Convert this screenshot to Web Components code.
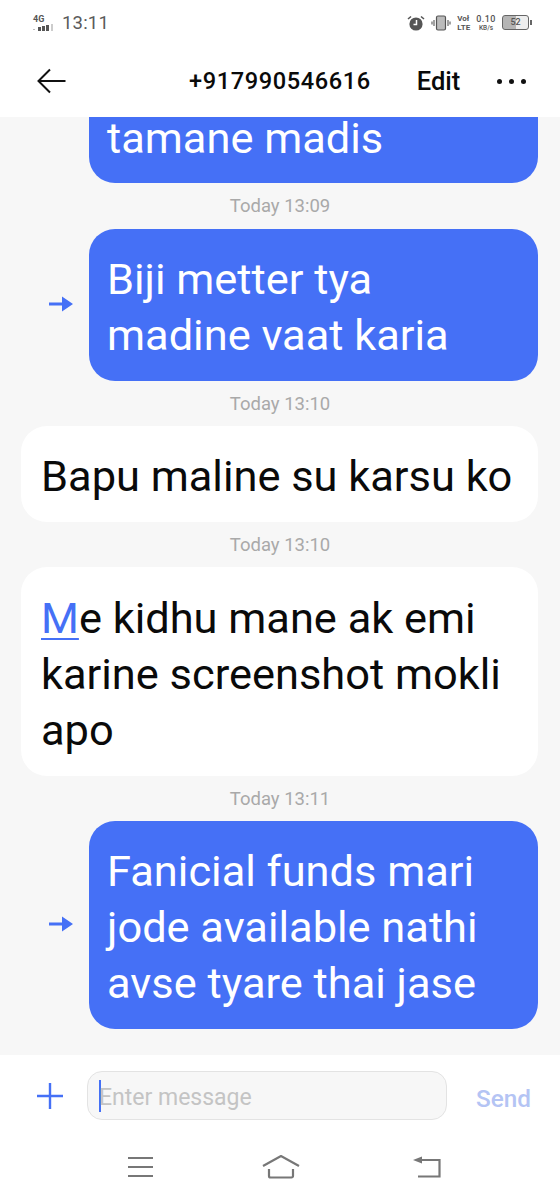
<!DOCTYPE html>
<html>
<head>
<meta charset="utf-8">
<style>
    html, body { margin: 0; padding: 0; }
    body { width: 560px; height: 1200px; overflow: hidden; background: #fff; font-family: Roboto, "Liberation Sans", sans-serif; }
    sms-screen { height: 1200px; }
</style>
</head>
<body>
<sms-screen>
    <status-bar slot="status"></status-bar>
    <title-bar slot="title" number="+917990546616"></title-bar>
    <msg-time>Today 13:09</msg-time>
    <msg-bubble out>Biji metter tya<br>madine vaat karia</msg-bubble>
    <msg-time>Today 13:10</msg-time>
    <msg-bubble>Bapu maline su karsu ko</msg-bubble>
    <msg-time>Today 13:10</msg-time>
    <msg-bubble style="--pt: 24px"><a>M</a>e kidhu mane ak emi<br>karine screenshot mokli<br>apo</msg-bubble>
    <msg-time>Today 13:11</msg-time>
    <msg-bubble out>Fanicial funds mari<br>jode available nathi<br>avse tyare thai jase</msg-bubble>
    <input-bar slot="input"></input-bar>
    <nav-keys slot="nav"></nav-keys>
</sms-screen>

<script>
class SmsScreen extends HTMLElement {
    constructor() {
        super();
        this.attachShadow({ mode: 'open' });
        this.shadowRoot.innerHTML = `
            <style>
                :host { display: flex; flex-direction: column; width: 560px; background: #fff; }
                .list {
                    flex: 1;
                    min-height: 0;
                    display: flex;
                    flex-direction: column;
                    justify-content: flex-end;
                    background: #f7f7f7;
                    padding: 0 22px 26px 21px;
                }
                .first {
                    align-self: flex-end;
                    width: 449px;
                    box-sizing: border-box;
                    padding: 0 20px 22px 18px;
                    background: #4570f6;
                    color: #fff;
                    font-size: 43.4px;
                    line-height: 44px;
                    border-radius: 0 0 26px 26px;
                }
            </style>
            <slot name="status"></slot>
            <slot name="title"></slot>
            <div class="list">
                <div class="first">tamane madis</div>
                <slot></slot>
            </div>
            <slot name="input"></slot>
            <slot name="nav"></slot>
        `;
    }
}

class StatusBar extends HTMLElement {
    constructor() {
        super();
        this.attachShadow({ mode: 'open' });
        this.shadowRoot.innerHTML = `
            <style>
                :host { display: flex; align-items: center; height: 45px; padding: 0 29px 0 32px; color: #555; }
                .time { font-size: 18.5px; margin-left: 5px; letter-spacing: .2px; color: #5a5a5a; }
                .net { position: relative; width: 25px; height: 18px; }
                .net b { position: absolute; left: 1px; top: 0; font: 700 9px/10px Roboto, sans-serif; }
                .net svg { position: absolute; left: 0; bottom: 0; }
                .right { margin-left: auto; display: flex; align-items: center; gap: 6px; }
                .stack { display: flex; flex-direction: column; align-items: center; font-weight: 500; }
                .lte { font-size: 8px; line-height: 9px; font-weight: 700; }
                .speed { font-size: 9px; line-height: 10px; letter-spacing: .5px; }
                .kb { font-size: 6.5px; line-height: 8px; }
                .batt { position: relative; width: 25px; height: 13px; border: 1px solid #666; border-radius: 3px; font-size: 9px; line-height: 13px; text-align: center; font-weight: 500; background: linear-gradient(90deg, #b5b5b5 52%, #eee 52%); margin-right: 2px; }
                .batt::after { content: ''; position: absolute; right: -4px; top: 4px; width: 2px; height: 5px; background: #666; }
            </style>
            <span class="net">
                <b>4G</b>
                <svg width="25" height="9" viewBox="0 0 25 9">
                    <rect x="1" y="6" width="2" height="1" fill="#bbb"/>
                    <rect x="6" y="4" width="3" height="4" fill="#555"/>
                    <rect x="10" y="3" width="3" height="5" fill="#555"/>
                    <rect x="14" y="2" width="3" height="6" fill="#555"/>
                    <rect x="19" y="1" width="2" height="7" fill="#ccc"/>
                </svg>
            </span>
            <span class="time">13:11</span>
            <span class="right">
                <svg width="18" height="16" viewBox="0 0 18 16">
                    <circle cx="9" cy="9" r="6.6" fill="#555"/>
                    <path d="M9.500 5v4.500H6.500" fill="none" stroke="#fff" stroke-width="1.500"/>
                    <path d="M1 4l3-2.500M17 4l-3-2.500" stroke="#555" stroke-width="1.600"/>
                </svg>
                <svg width="20" height="16" viewBox="0 0 20 16">
                    <rect x="5.500" y="1" width="9" height="14" rx="1.500" fill="#bbb" stroke="#555" stroke-width="1.200"/>
                    <path d="M3 5v6M1 6.500v3M17 5v6M19 6.500v3" stroke="#555" stroke-width="1.100"/>
                </svg>
                <span class="stack"><span class="lte">Vo&#322;<br>LTE</span></span>
                <span class="stack"><span class="speed">0.10</span><span class="kb">KB/s</span></span>
                <span class="batt">52</span>
            </span>
        `;
    }
}

class TitleBar extends HTMLElement {
    constructor() {
        super();
        this.attachShadow({ mode: 'open' });
        this.shadowRoot.innerHTML = `
            <style>
                :host { display: flex; align-items: center; height: 72px; padding: 0 34px 0 37px; color: #0a0a0a; }
                .num { margin-left: 123px; font-size: 23.6px; font-weight: 500; letter-spacing: .6px; }
                .edit { margin-left: 46px; font-size: 25.5px; font-weight: 500; }
                .dots { margin-left: auto; display: flex; gap: 7px; }
                .dots i { width: 5px; height: 5px; border-radius: 50%; background: #111; }
            </style>
            <svg width="29" height="26" viewBox="0 0 29 26">
                <path d="M28.500 13H1.500M13 1.500L1.500 13L13 24.500" fill="none" stroke="#111" stroke-width="2"/>
            </svg>
            <span class="num">${this.getAttribute('number')}</span>
            <span class="edit">Edit</span>
            <span class="dots"><i></i><i></i><i></i></span>
        `;
    }
}

class MsgTime extends HTMLElement {
    constructor() {
        super();
        this.attachShadow({ mode: 'open' });
        this.shadowRoot.innerHTML = `
            <style>
                :host { display: block; height: 45px; line-height: 46px; text-align: center; font-size: 18.5px; color: #a9a9a9; padding-left: 1px; }
                :host(:first-of-type) { height: 46px; }
            </style>
            <slot></slot>
        `;
    }
}

class MsgBubble extends HTMLElement {
    constructor() {
        super();
        this.attachShadow({ mode: 'open' });
        this.shadowRoot.innerHTML = `
            <style>
                :host { display: flex; align-items: center; justify-content: flex-end; position: relative; }
                .box {
                    flex: 1;
                    box-sizing: border-box;
                    padding: var(--pt, 23px) 20px 17px 20px;
                    background: #fff;
                    color: #0a0a0a;
                    font-size: 43.4px;
                    line-height: 56px;
                    border-radius: 26px;
                }
                :host([out]) .box { flex: 0 0 449px; background: #4570f6; color: #fff; padding-left: 18px; }
                .arrow { display: none; margin: -2px 16px 0 0; }
                :host([out]) .arrow { display: block; }
                ::slotted(a) { color: #4570f6; text-decoration: underline; text-decoration-thickness: 2px; text-underline-offset: 5px; }
            </style>
            <svg class="arrow" width="24" height="16" viewBox="0 0 24 16">
                <path d="M0 6.500h13V.5L24 8L13 15.500V9.500H0z" fill="#4570f6"/>
            </svg>
            <div class="box"><slot></slot></div>
        `;
    }
}

class InputBar extends HTMLElement {
    constructor() {
        super();
        this.attachShadow({ mode: 'open' });
        this.shadowRoot.innerHTML = `
            <style>
                :host { display: flex; align-items: center; height: 85px; box-sizing: border-box; padding: 0 29px 4px 37px; background: #fff; }
                .field { display: flex; align-items: center; width: 360px; height: 49px; box-sizing: border-box; margin-left: 24px; padding-left: 11px; background: #f7f7f7; border: 1px solid #e3e3e3; border-radius: 15px; font-size: 23px; color: #c4c4c4; }
                .field span:last-child { padding-top: 3px; }
                .caret { width: 2px; height: 32px; background: #4570f6; margin-right: -2px; }
                .send { margin-left: auto; font-size: 24.3px; font-weight: 500; color: #b4c4f4; padding-top: 6px; }
            </style>
            <svg width="26" height="26" viewBox="0 0 26 26">
                <path d="M13 0v26M0 13h26" stroke="#4570f6" stroke-width="2.400"/>
            </svg>
            <div class="field"><span class="caret"></span><span>Enter message</span></div>
            <span class="send">Send</span>
        `;
    }
}

class NavKeys extends HTMLElement {
    constructor() {
        super();
        this.attachShadow({ mode: 'open' });
        this.shadowRoot.innerHTML = `
            <style>
                :host { display: flex; height: 60px; box-sizing: border-box; padding: 15px 0 0 127px; background: #fff; }
                svg { display: block; fill: none; stroke: #777; stroke-width: 2.200; }
                .home { margin-left: 108px; }
                .back { margin-left: 113px; }
            </style>
            <svg width="27" height="24" viewBox="0 0 27 24">
                <path d="M1 3h25M1 12h25M1 21h25"/>
            </svg>
            <svg class="home" width="38" height="24" viewBox="0 0 38 24">
                <path d="M1 11L19 1L37 11M7 14v7a1.500 1.500 0 0 0 1.500 1.500h21a1.500 1.500 0 0 0 1.500-1.500V14"/>
            </svg>
            <svg class="back" width="28" height="24" viewBox="0 0 28 24">
                <path d="M8 5h18.500v16.500H5"/>
                <path d="M0 5L9 1.500V8.500z" fill="#777" stroke="none"/>
            </svg>
        `;
    }
}

customElements.define('sms-screen', SmsScreen);
customElements.define('status-bar', StatusBar);
customElements.define('title-bar', TitleBar);
customElements.define('msg-time', MsgTime);
customElements.define('msg-bubble', MsgBubble);
customElements.define('input-bar', InputBar);
customElements.define('nav-keys', NavKeys);
</script>
</body>
</html>
